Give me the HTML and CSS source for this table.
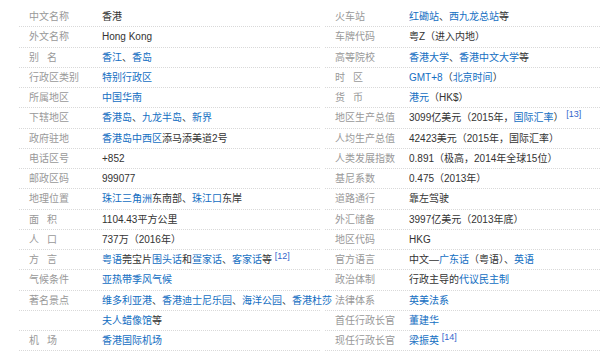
FILE: index.html
```html
<!DOCTYPE html>
<html lang="zh">
<head>
<meta charset="utf-8">
<link rel="stylesheet" href="styles.css">
</head>
<body>
<div class="info">
  <dl class="col col-left">
    <div class="row"><dt>中文名称</dt><dd>香港</dd></div>
    <div class="row"><dt>外文名称</dt><dd>Hong Kong</dd></div>
    <div class="row"><dt>别<span class="sp"></span>名</dt><dd><a>香江</a>、<a>香岛</a></dd></div>
    <div class="row"><dt>行政区类别</dt><dd><a>特别行政区</a></dd></div>
    <div class="row"><dt>所属地区</dt><dd><a>中国华南</a></dd></div>
    <div class="row"><dt>下辖地区</dt><dd><a>香港岛</a>、<a>九龙半岛</a>、<a>新界</a></dd></div>
    <div class="row"><dt>政府驻地</dt><dd><a>香港岛中西区</a>添马添美道2号</dd></div>
    <div class="row"><dt>电话区号</dt><dd>+852</dd></div>
    <div class="row"><dt>邮政区码</dt><dd>999077</dd></div>
    <div class="row"><dt>地理位置</dt><dd><a>珠江三角洲</a>东南部、<a>珠江口</a>东岸</dd></div>
    <div class="row"><dt>面<span class="sp"></span>积</dt><dd>1104.43平方公里</dd></div>
    <div class="row"><dt>人<span class="sp"></span>口</dt><dd>737万（2016年）</dd></div>
    <div class="row"><dt>方<span class="sp"></span>言</dt><dd><a>粤语</a>莞宝片<a>围头话</a>和<a>疍家话</a>、<a>客家话</a>等 <sup>[12]</sup></dd></div>
    <div class="row"><dt>气候条件</dt><dd><a>亚热带季风气候</a></dd></div>
    <div class="row"><dt>著名景点</dt><dd><a>维多利亚港</a>、<a>香港迪士尼乐园</a>、<a>海洋公园</a>、<a>香港杜莎</a></dd></div>
    <div class="row"><dt></dt><dd><a>夫人蜡像馆</a>等</dd></div>
    <div class="row"><dt>机<span class="sp"></span>场</dt><dd><a>香港国际机场</a></dd></div>
  </dl>
  <dl class="col col-right">
    <div class="row"><dt>火车站</dt><dd><a>红磡站</a>、<a>西九龙总站</a>等</dd></div>
    <div class="row"><dt>车牌代码</dt><dd>粤Z（进入内地）</dd></div>
    <div class="row"><dt>高等院校</dt><dd><a>香港大学</a>、<a>香港中文大学</a>等</dd></div>
    <div class="row"><dt>时<span class="sp"></span>区</dt><dd><a>GMT+8</a>（<a>北京时间</a>）</dd></div>
    <div class="row"><dt>货<span class="sp"></span>币</dt><dd><a>港元</a>（HK$）</dd></div>
    <div class="row"><dt>地区生产总值</dt><dd>3099亿美元（2015年，<a>国际汇率</a>） <sup>[13]</sup></dd></div>
    <div class="row"><dt>人均生产总值</dt><dd>42423美元（2015年，国际汇率）</dd></div>
    <div class="row"><dt>人类发展指数</dt><dd>0.891（极高，2014年全球15位）</dd></div>
    <div class="row"><dt>基尼系数</dt><dd>0.475（2013年）</dd></div>
    <div class="row"><dt>道路通行</dt><dd>靠左驾驶</dd></div>
    <div class="row"><dt>外汇储备</dt><dd>3997亿美元（2013年底）</dd></div>
    <div class="row"><dt>地区代码</dt><dd>HKG</dd></div>
    <div class="row"><dt>官方语言</dt><dd>中文—<a>广东话</a>（粤语）、<a>英语</a></dd></div>
    <div class="row"><dt>政治体制</dt><dd>行政主导的<a>代议民主制</a></dd></div>
    <div class="row"><dt>法律体系</dt><dd><a>英美法系</a></dd></div>
    <div class="row"><dt>首任行政长官</dt><dd><a>董建华</a></dd></div>
    <div class="row"><dt>现任行政长官</dt><dd><a>梁振英</a> <sup>[14]</sup></dd></div>
  </dl>
</div>
</body>
</html>
```
FILE: styles.css
```css
html, body {
  margin: 0;
  padding: 0;
  background: #fff;
}
body {
  font-family: "Liberation Sans", "Noto Sans CJK SC", sans-serif;
  font-size: 10px;
  color: #333;
}
.info {
  display: flex;
  padding: 7px 0 0 19px;
}
.col {
  margin: 0;
  display: flex;
  flex-direction: column;
}
.col-left {
  width: 301px;
}
.col-right {
  margin-left: 5px;
  flex: 1;
}
.row {
  display: flex;
  height: 19.25px;
  line-height: 19.25px;
  border-bottom: 1px dotted #d9d9d9;
  white-space: nowrap;
}
dt {
  flex: none;
  width: 73px;
  padding-left: 10px;
  color: #999;
}
.col-right dt {
  width: 74px;
}
dd {
  margin: 0;
}
.sp {
  display: inline-block;
  width: 8px;
}
a {
  color: #136ec2;
  text-decoration: none;
}
sup {
  font-size: 9px;
  color: #3366cc;
  vertical-align: 0;
  position: relative;
  top: -4px;
  line-height: 0;
}
```
